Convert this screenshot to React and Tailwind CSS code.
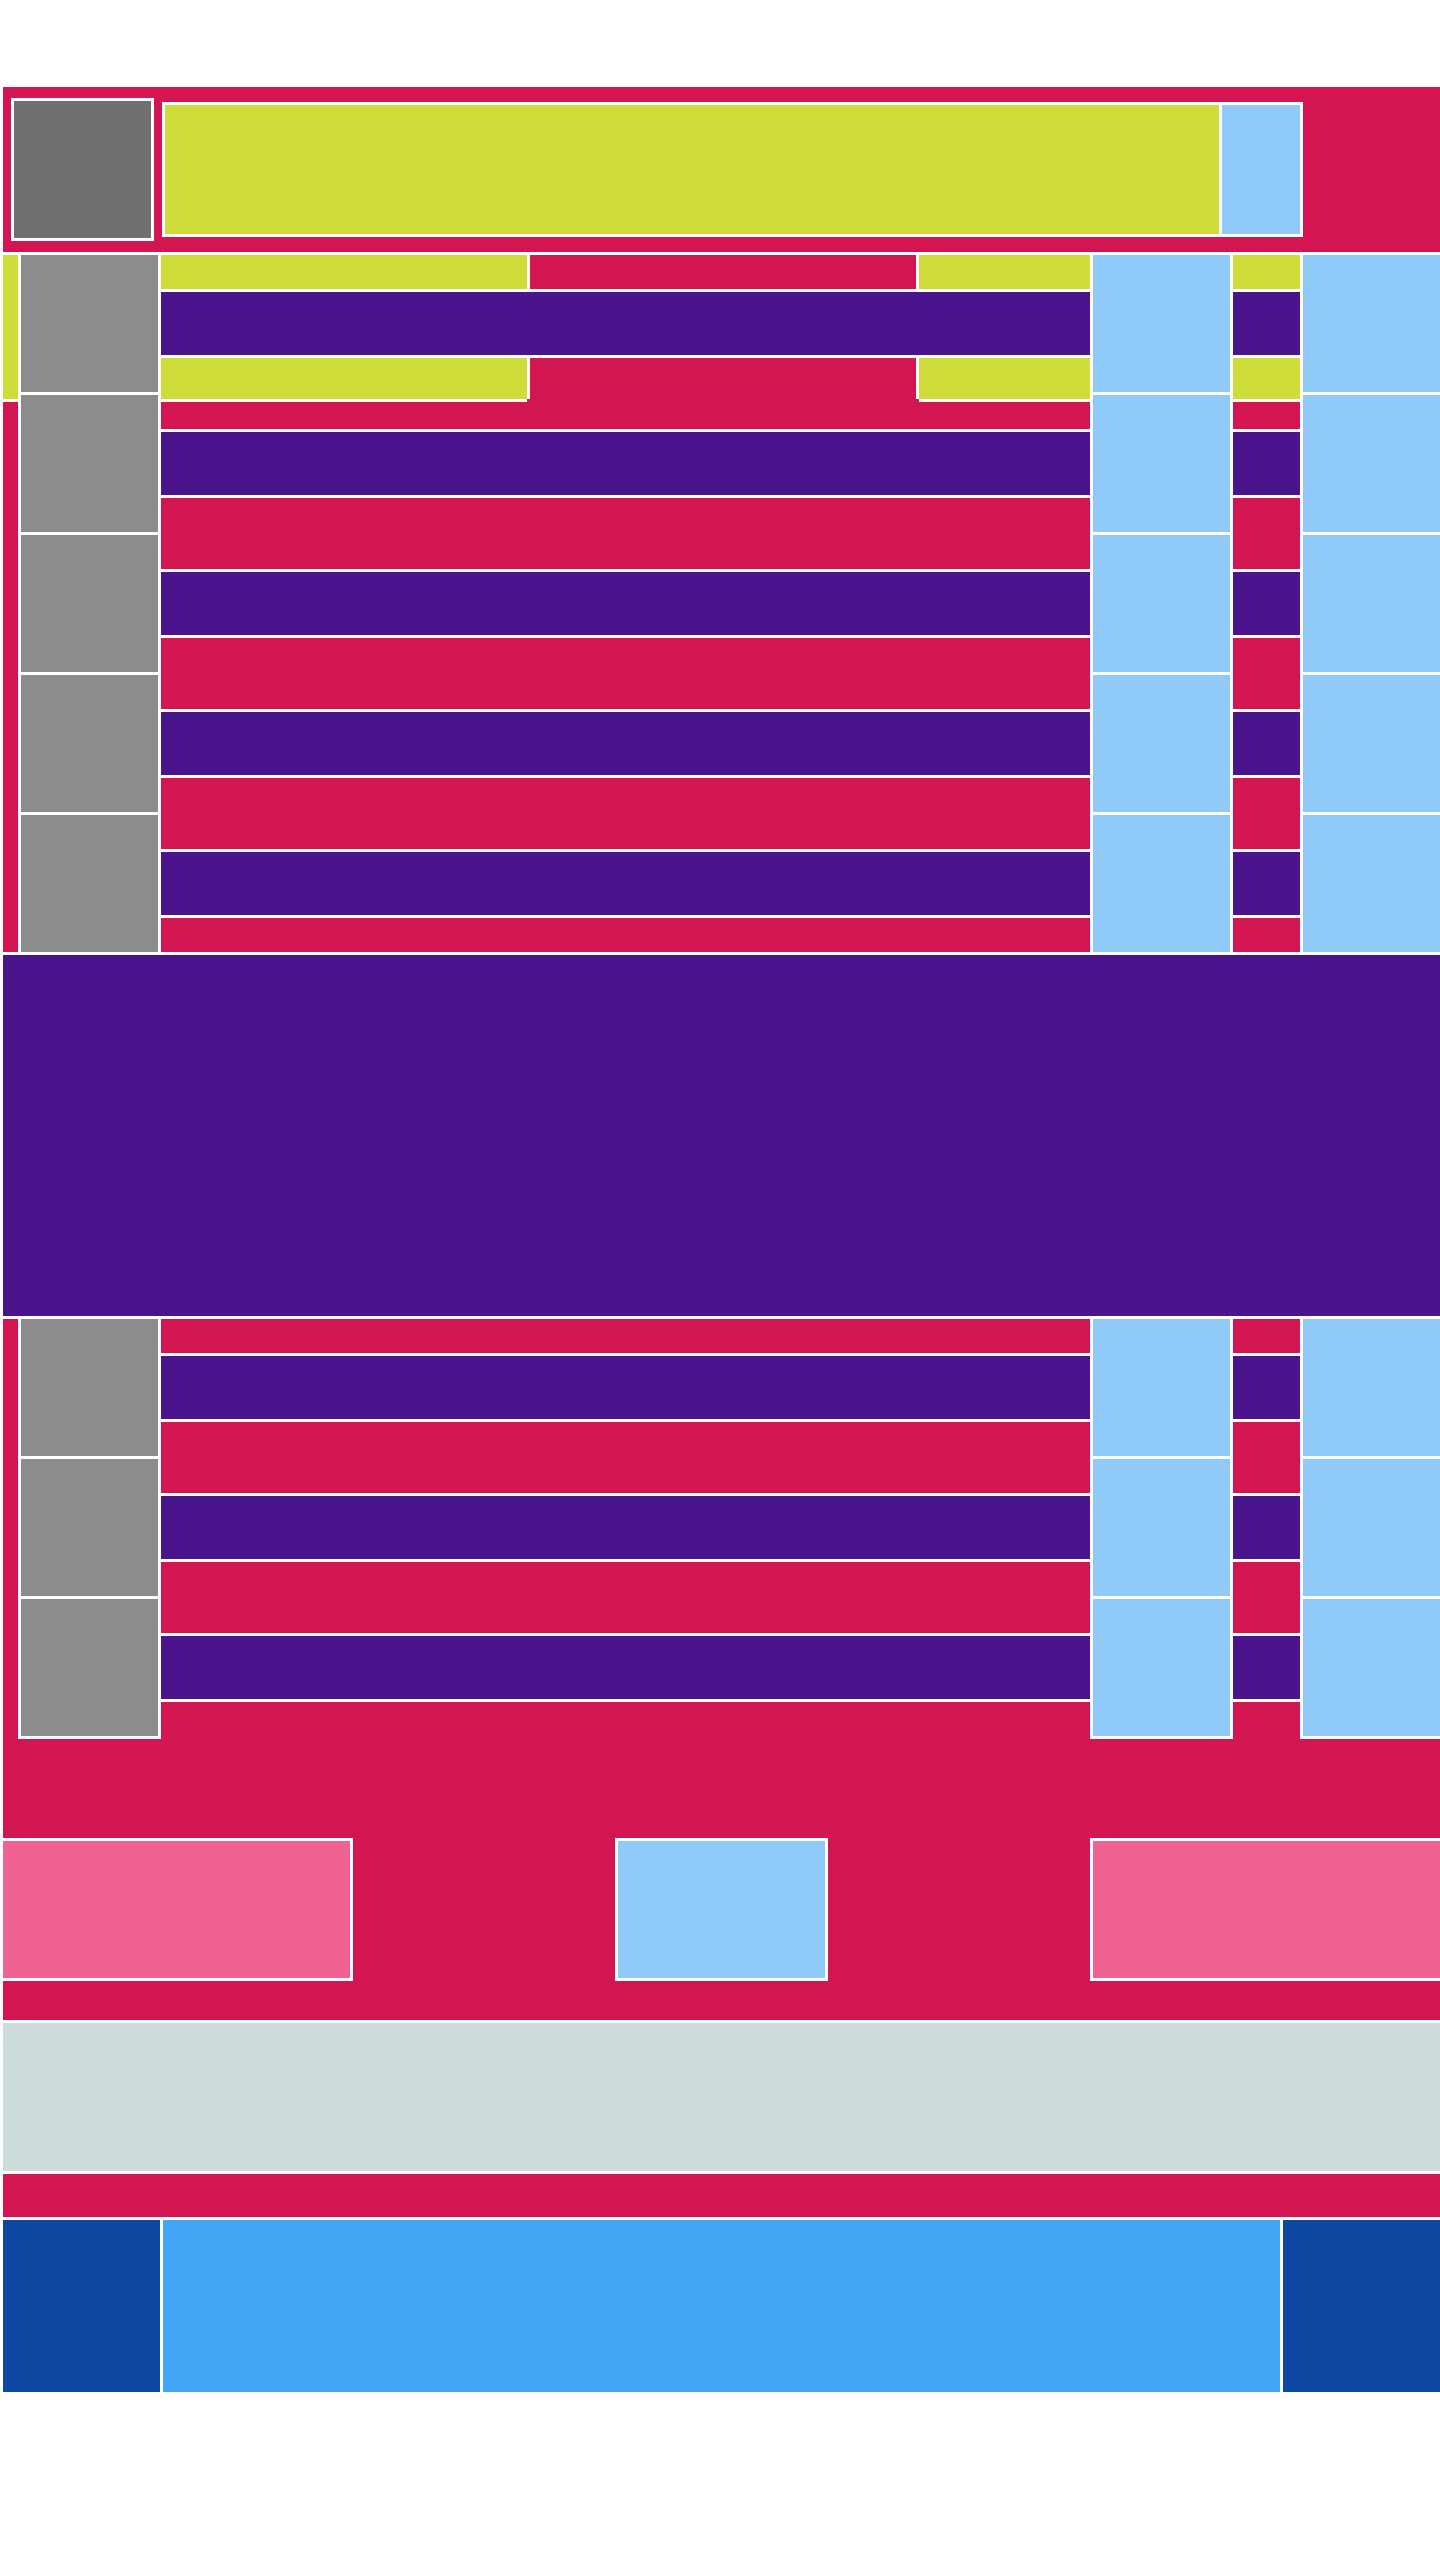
import React from 'react';

const PINK = 'bg-[#d31651]';

const Band = ({ h, color }) => <div className={`${color}`} style={{ height: h }} />;

const stackTop = [
    { h: 27, c: 'bg-[#d31651]' },
    { h: 63, c: 'bg-[#4a148c]' },
    { h: 71, c: 'bg-[#d31651]' },
    { h: 63, c: 'bg-[#4a148c]' },
    { h: 71, c: 'bg-[#d31651]' },
    { h: 63, c: 'bg-[#4a148c]' },
    { h: 71, c: 'bg-[#d31651]' },
    { h: 63, c: 'bg-[#4a148c]' },
    { h: 34, c: 'bg-[#d31651]' },
];

const stackBottom = [
    { h: 34, c: 'bg-[#d31651]' },
    { h: 63, c: 'bg-[#4a148c]' },
    { h: 71, c: 'bg-[#d31651]' },
    { h: 63, c: 'bg-[#4a148c]' },
    { h: 71, c: 'bg-[#d31651]' },
    { h: 63, c: 'bg-[#4a148c]' },
];

const Cells = ({ n, color }) => (
    <>
        {Array.from({ length: n }).map((_, i) => (
            <div key={i} className={`h-[137px] w-[137px] ${color}`} />
        ))}
    </>
);

const SplitRow = ({ h }) => (
    <div className="flex" style={{ height: h }}>
        <div className="w-[366px] bg-[#cfdd3b]" />
        <div className="w-[3px] bg-white" />
        <div className="w-[386px] bg-[#d31651]" />
        <div className="w-[3px] bg-white" />
        <div className="flex-1 bg-[#cfdd3b]" />
    </div>
);

// main list column, first item highlighted in two yellow pieces
const MainList = () => (
    <div className="w-[929px] flex flex-col bg-white">
        <SplitRow h={34} />
        <div className="h-[3px]" />
        <div className="h-[63px] bg-[#4a148c]" />
        <div className="h-[3px]" />
        <SplitRow h={41} />
        <div className="flex h-[3px]">
            <div className="w-[366px]" />
            <div className="w-[392px] bg-[#d31651]" />
            <div className="flex-1" />
        </div>
        <div className="flex flex-col gap-[3px]">
            {stackTop.map((b, i) => <Band key={i} h={b.h} color={b.c} />)}
        </div>
    </div>
);

const NarrowList = () => (
    <div className="w-[67px] flex flex-col gap-[3px]">
        <div className="h-[34px] bg-[#cfdd3b]" />
        <div className="h-[63px] bg-[#4a148c]" />
        <div className="h-[41px] bg-[#cfdd3b]" />
        {stackTop.map((b, i) => <Band key={i} h={b.h} color={b.c} />)}
    </div>
);

const LowerList = ({ width }) => (
    <div className="flex flex-col gap-[3px] pb-[3px] bg-white" style={{ width }}>
        {stackBottom.map((b, i) => <Band key={i} h={b.h} color={b.c} />)}
    </div>
);

export default function App() {
    return (
        <div className="min-h-[2560px] bg-white pt-[87px] pl-[3px]">
            <div className="flex flex-col gap-[3px]">
                {/* header */}
                <div className={`flex items-start h-[165px] ${PINK}`}>
                    <div className="ml-[8px] mt-[11px] bg-white p-[3px]">
                        <div className="w-[137px] h-[137px] bg-[#707070]" />
                    </div>
                    <div className="ml-[8px] mt-[15px] bg-white p-[3px] flex gap-[3px]">
                        <div className="w-[1054px] h-[129px] bg-[#cfdd3b]" />
                        <div className="w-[78px] h-[129px] bg-[#90caf9]" />
                    </div>
                </div>

                {/* list 1 */}
                <div className="flex gap-[3px] h-[697px]">
                    <div className="w-[15px] flex flex-col gap-[3px]">
                        <div className="h-[144px] bg-[#cfdd3b]" />
                        <div className={`flex-1 ${PINK}`} />
                    </div>
                    <div className="flex flex-col gap-[3px]">
                        <Cells n={5} color="bg-[#8c8c8c]" />
                    </div>
                    <MainList />
                    <div className="flex flex-col gap-[3px]">
                        <Cells n={5} color="bg-[#90caf9]" />
                    </div>
                    <NarrowList />
                    <div className="flex flex-col gap-[3px]">
                        <Cells n={5} color="bg-[#90caf9]" />
                    </div>
                </div>

                {/* banner */}
                <div className="h-[361px] bg-[#4a148c]" />

                {/* list 2 + actions */}
                <div className={`flex flex-col ${PINK}`}>
                    <div className="flex items-start">
                        <div className="w-[15px]" />
                        <div className="bg-white px-[3px] pb-[3px] flex flex-col gap-[3px]">
                            <Cells n={3} color="bg-[#8c8c8c]" />
                        </div>
                        <LowerList width={929} />
                        <div className="bg-white px-[3px] pb-[3px] flex flex-col gap-[3px]">
                            <Cells n={3} color="bg-[#90caf9]" />
                        </div>
                        <LowerList width={67} />
                        <div className="bg-white pl-[3px] pb-[3px] flex flex-col gap-[3px]">
                            <Cells n={3} color="bg-[#90caf9]" />
                        </div>
                    </div>
                    <div className="mt-[99px] mb-[39px] flex justify-between">
                        <div className="w-[350px] bg-white pt-[3px] pr-[3px] pb-[3px]">
                            <div className="h-[137px] bg-[#f06292]" />
                        </div>
                        <div className="w-[213px] bg-white p-[3px]">
                            <div className="h-[137px] bg-[#90caf9]" />
                        </div>
                        <div className="w-[350px] bg-white pl-[3px] pt-[3px] pb-[3px]">
                            <div className="h-[137px] bg-[#f06292]" />
                        </div>
                    </div>
                </div>

                <div className="h-[148px] bg-[#cedcdc]" />
                <div className={`h-[43px] ${PINK}`} />

                {/* footer */}
                <div className="flex gap-[3px] h-[172px]">
                    <div className="w-[157px] bg-[#0d47a1]" />
                    <div className="flex-1 bg-[#42a5f5]" />
                    <div className="w-[157px] bg-[#0d47a1]" />
                </div>
            </div>
        </div>
    );
}
